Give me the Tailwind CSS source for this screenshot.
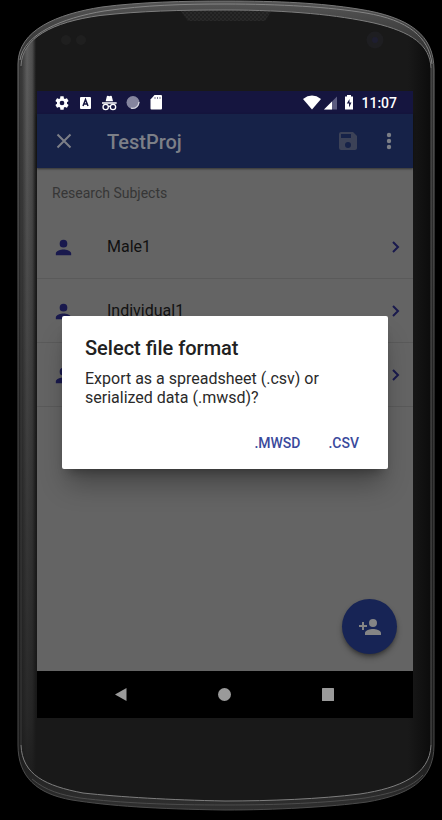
<!DOCTYPE html>
<html lang="en">
<head>
<meta charset="utf-8">
<meta name="viewport" content="width=device-width, initial-scale=1">
<title>TestProj</title>
<script src="https://cdn.jsdelivr.net/npm/@tailwindcss/browser@4"></script>
</head>
<body class="bg-black font-['Roboto',sans-serif]">
<div class="relative isolate flex min-h-screen flex-col pt-[91px] pr-[29px] pb-[102px] pl-[37px]">
  <!-- Phone body -->
  <svg class="absolute inset-0 -z-10 h-full w-full" viewBox="0 0 442 820" preserveAspectRatio="none" aria-hidden="true">
    <defs>
      <linearGradient id="rim" x1="0" y1="0" x2="0" y2="1">
        <stop offset="0" stop-color="#555"/><stop offset=".06" stop-color="#333"/><stop offset=".5" stop-color="#222"/><stop offset=".93" stop-color="#1c1c1c"/><stop offset="1" stop-color="#303030"/>
      </linearGradient>
      <linearGradient id="edge" x1="0" y1="0" x2="0" y2="1">
        <stop offset="0" stop-color="#777"/><stop offset=".5" stop-color="#4c4c4c"/><stop offset="1" stop-color="#4a4a4a"/>
      </linearGradient>
      <linearGradient id="side" x1="0" y1="0" x2="1" y2="0">
        <stop offset="0" stop-color="#333"/><stop offset=".4" stop-color="#626262"/><stop offset=".75" stop-color="#505050"/><stop offset="1" stop-color="#191919"/>
      </linearGradient>
      <linearGradient id="fade" x1="0" y1="0" x2="0" y2="1">
        <stop offset="0" stop-color="#191919" stop-opacity="0"/><stop offset=".5" stop-color="#191919" stop-opacity=".45"/><stop offset=".9" stop-color="#191919" stop-opacity=".8"/><stop offset="1" stop-color="#191919"/>
      </linearGradient>
      <linearGradient id="right" x1="0" y1="0" x2="1" y2="0">
        <stop offset="0" stop-color="#0b0b0b" stop-opacity="0"/><stop offset="1" stop-color="#0b0b0b"/>
      </linearGradient>
      <pattern id="mesh" width="4" height="4" patternUnits="userSpaceOnUse"><rect width="4" height="4" fill="#292929"/><circle cx="1" cy="1" r="1" fill="#1c1c1c"/><circle cx="3" cy="3" r="1" fill="#1c1c1c"/></pattern>
      <clipPath id="face"><path d="M21 68C21 38 52 22 100 15.500C140 11 180 10 225 10C290 10 338 15 374 23C412 32 431 45 431 68V745C430 775 400 788 360 794C320 799 270 801 225 801C170 800 120 797 83 793C46 786 22 775 21 745Z"/></clipPath>
    </defs>
    <path d="M18 64C18 30 57 14 102 7C140 2 185 1 225 1C280 1 320 3 358 9C410 17 434 35 434 70V745C434 782 407 795 367 802C330 807 275 810 225 810C155 809 110 806 72 800C37 794 18 777 18 745Z" fill="url(#rim)" stroke="url(#edge)"/>
    <path d="M20 60C24 34 62 18 104 11C145 5 185 4 225 4C280 4 330 7 366 13C408 20 429 37 432 64" fill="none" stroke="#858585"/>
    <path d="M32 779C46 791 62 795 80 798C120 803 170 805 225 805C280 805 325 803 365 798C395 793 412 787 423 775" fill="none" stroke="#4c4c4c"/>
    <path d="M21 68C21 38 52 22 100 15.500C140 11 180 10 225 10C290 10 338 15 374 23C412 32 431 45 431 68V745C430 775 400 788 360 794C320 799 270 801 225 801C170 800 120 797 83 793C46 786 22 775 21 745Z" fill="#191919"/>
    <g clip-path="url(#face)">
      <rect x="21" y="10" width="15" height="792" fill="url(#side)"/>
      <rect x="21" y="10" width="15" height="792" fill="url(#fade)"/>
      <rect x="408" y="10" width="24" height="792" fill="url(#right)"/>
      <path d="M180 10H272L265 21H188Z" fill="url(#mesh)"/>
    </g>
    <path d="M431 68V745" stroke="#555"/>
    <path d="M21 68V745" stroke="#3c3c3c"/>
    <path d="M21 66C22 38 52 22 100 15.500C140 11 180 10 225 10C290 10 338 15 374 23C412 32 430 45 431 68M21 745C22 775 46 786 83 793C120 797 170 800 225 801C270 801 320 799 360 794C400 788 430 775 431 745" fill="none" stroke="#7e7e7e"/>
    <circle cx="66" cy="40" r="5" fill="#1f1f1f"/><circle cx="81" cy="40" r="5" fill="#1f1f1f"/>
    <circle cx="375" cy="40" r="8.500" fill="#1e1e21"/><circle cx="375" cy="40" r="3" fill="#1e1e30"/>
  </svg>

  <div class="relative flex flex-1 flex-col">
    <!-- Status bar -->
    <div class="flex h-[23px] items-center justify-between bg-[#15153f] pr-4 pl-[17px] text-white">
      <div class="flex items-center gap-2">
        <svg class="size-4" viewBox="0 0 24 24" fill="currentColor" role="img" aria-label="Settings"><path d="M19.430 12.980c.04-.32.07-.64.07-.98s-.03-.66-.07-.98l2.110-1.650c.19-.15.24-.42.12-.64l-2-3.460c-.12-.22-.39-.3-.61-.22l-2.490 1c-.52-.4-1.080-.73-1.690-.98l-.38-2.650A.49.49 0 0 0 14 2h-4c-.25 0-.46.18-.49.42l-.38 2.650c-.61.25-1.170.59-1.690.98l-2.490-1c-.23-.09-.49 0-.61.22l-2 3.460c-.13.22-.07.49.12.64l2.110 1.650c-.04.32-.07.65-.07.98s.03.66.07.98l-2.110 1.650c-.19.15-.24.42-.12.64l2 3.460c.12.22.39.3.61.22l2.490-1c.52.4 1.080.73 1.690.98l.38 2.650c.03.24.24.42.49.42h4c.25 0 .46-.18.49-.42l.38-2.650c.61-.25 1.170-.59 1.690-.98l2.490 1c.23.09.49 0 .61-.22l2-3.460c.12-.22.07-.49-.12-.64zM12 15.500a3.500 3.500 0 1 1 0-7 3.500 3.500 0 0 1 0 7z"/></svg>
        <svg class="size-4" viewBox="0 0 16 16" role="img" aria-label="Keyboard"><rect x="2" y="2" width="11" height="12" rx="1" fill="#fff"/><path d="M5 11 7.500 4.500 10 11M5.800 9h3.400" fill="none" stroke="#15153f" stroke-width="1.500"/></svg>
        <svg class="size-4" viewBox="0 0 24 24" fill="currentColor" role="img" aria-label="Incognito"><path d="M16.500 9.500h-11L7.300 1.900c.2-.7.900-1 1.500-.8L11 1.800l2.200-.7c.6-.2 1.300.1 1.500.8zM0 11h22v2H0z"/><path d="M1.500 18a4 4 0 1 0 8 0 4 4 0 1 0-8 0zM12.500 18a4 4 0 1 0 8 0 4 4 0 1 0-8 0zM9.500 17.500q1.500-1.500 3 0" fill="none" stroke="currentColor" stroke-width="2"/></svg>
        <svg class="size-4" viewBox="0 0 16 16" role="img" aria-label="Sync"><circle cx="7" cy="7.500" r="6.500" fill="#85859e"/><path d="M5 13.200Q12 14 13 7" fill="none" stroke="#d5d5df" stroke-width="1.200"/></svg>
        <svg class="size-4" viewBox="0 0 16 16" role="img" aria-label="SD card"><path d="M4.500 0H11q1 0 1 1V13.500q0 1-1 1H1.500q-1 0-1-1V4.500z" fill="#fff"/><path d="M5 2v2M7.500 2v2M10 2v2" stroke="#777790"/></svg>
      </div>
      <div class="flex items-center gap-0.5">
        <svg class="h-4 w-[18px]" viewBox="0 0 18 16" role="img" aria-label="Wi-Fi"><path d="M0 4Q9-2.800 18 4L9 14.500z" fill="#fff"/></svg>
        <svg class="size-4" viewBox="0 0 16 16" role="img" aria-label="Signal"><path d="M1 14.500 14 1.500V14.500z" fill="#5c5c80"/><path d="M1 14.500 9 6.500V14.500z" fill="#fff"/></svg>
        <svg class="size-4" viewBox="0 0 16 16" role="img" aria-label="Battery charging"><path d="M6 1.500V0H10V1.500H12V14.500H4V1.500z" fill="#fff"/><path d="M8.500 4 5.800 8.500H8V12.500l2.500-5H8.500z" fill="#15153f"/></svg>
        <span class="pl-0.5 text-sm leading-4 font-medium">11:07</span>
      </div>
    </div>

    <!-- App bar -->
    <header class="z-10 flex h-[54px] items-center bg-[#162248] pr-3 pl-[17px] text-[#7c7f87] shadow-xs shadow-black/50">
      <button type="button" aria-label="Close" class="w-[53px]"><svg class="size-5" viewBox="0 0 20 20" fill="none" stroke="currentColor" stroke-width="2"><path d="m3.500 3.500 13 13M16.500 3.500l-13 13"/></svg></button>
      <h1 class="flex-1 pt-0.5 text-xl leading-6 font-medium">TestProj</h1>
      <button type="button" aria-label="Save" class="pr-[17px] text-[#3c4257]"><svg class="size-6" viewBox="0 0 24 24" fill="currentColor"><path d="M17 3H5a2 2 0 0 0-2 2v14a2 2 0 0 0 2 2h14c1.100 0 2-.9 2-2V7zm-5 16a3 3 0 1 1 0-6 3 3 0 0 1 0 6zm3-10H5V5h10z"/></svg></button>
      <button type="button" aria-label="More options"><svg class="size-6" viewBox="0 0 24 24" fill="currentColor"><circle cx="12" cy="6" r="2.200"/><circle cx="12" cy="12" r="2.200"/><circle cx="12" cy="18" r="2.200"/></svg></button>
    </header>

    <!-- Subject list -->
    <main class="flex-1 bg-[#646464]">
      <h2 class="flex h-[47px] items-center pt-0.5 pl-[15px] text-sm text-[#363636]">Research Subjects</h2>
      <ul class="text-base text-[#111]">
        <li class="h-16 border-b border-[#5a5a5a]"><a href="#male1" class="flex h-full items-center pt-px pr-2 pl-[15px]">
          <svg class="mr-8 size-[23px] text-[#19194d]" viewBox="0 0 24 24" fill="currentColor" aria-hidden="true"><path d="M12 12a4 4 0 1 0 0-8 4 4 0 0 0 0 8zm0 2c-2.670 0-8 1.340-8 4v2h16v-2c0-2.660-5.330-4-8-4z"/></svg>
          <span class="flex-1">Male1</span>
          <svg class="size-5 text-[#19194d]" viewBox="0 0 20 20" fill="none" stroke="currentColor" stroke-width="2" aria-hidden="true"><path d="m8 5 5 5-5 5"/></svg></a></li>
        <li class="h-16 border-b border-[#5a5a5a]"><a href="#individual1" class="flex h-full items-center pt-px pr-2 pl-[15px]">
          <svg class="mr-8 size-[23px] text-[#19194d]" viewBox="0 0 24 24" fill="currentColor" aria-hidden="true"><path d="M12 12a4 4 0 1 0 0-8 4 4 0 0 0 0 8zm0 2c-2.670 0-8 1.340-8 4v2h16v-2c0-2.660-5.330-4-8-4z"/></svg>
          <span class="flex-1">Individual1</span>
          <svg class="size-5 text-[#19194d]" viewBox="0 0 20 20" fill="none" stroke="currentColor" stroke-width="2" aria-hidden="true"><path d="m8 5 5 5-5 5"/></svg></a></li>
        <li class="h-16 border-b border-[#5a5a5a]"><a href="#subject3" aria-label="Subject" class="flex h-full items-center pt-px pr-2 pl-[15px]">
          <svg class="mr-8 size-[23px] text-[#19194d]" viewBox="0 0 24 24" fill="currentColor" aria-hidden="true"><path d="M12 12a4 4 0 1 0 0-8 4 4 0 0 0 0 8zm0 2c-2.670 0-8 1.340-8 4v2h16v-2c0-2.660-5.330-4-8-4z"/></svg>
          <span class="flex-1"></span>
          <svg class="size-5 text-[#19194d]" viewBox="0 0 20 20" fill="none" stroke="currentColor" stroke-width="2" aria-hidden="true"><path d="m8 5 5 5-5 5"/></svg></a></li>
      </ul>
    </main>

    <!-- Add button -->
    <button type="button" aria-label="Add subject" class="absolute right-4 bottom-16 flex size-[55px] items-center justify-center rounded-full bg-[#172455] text-[#858585] shadow-md shadow-black/40">
      <svg class="size-6" viewBox="0 0 24 24" fill="currentColor"><path d="M15 12a4 4 0 1 0 0-8 4 4 0 0 0 0 8zm-9-2V7H4v3H1v2h3v3h2v-3h3v-2zm9 4c-2.670 0-8 1.340-8 4v2h16v-2c0-2.660-5.330-4-8-4z"/></svg>
    </button>

    <!-- Navigation bar -->
    <nav class="flex h-[47px] items-center justify-center gap-[79px] bg-black text-[#9a9a9a]">
      <button type="button" aria-label="Back"><svg class="size-6" viewBox="0 0 24 24" fill="currentColor"><path d="M16.500 5V18L5 11.500z"/></svg></button>
      <button type="button" aria-label="Home"><svg class="size-6" viewBox="0 0 24 24" fill="currentColor"><circle cx="11.500" cy="11.500" r="6.500"/></svg></button>
      <button type="button" aria-label="Recent apps"><svg class="size-6" viewBox="0 0 24 24" fill="currentColor"><rect x="6" y="5" width="12" height="13" rx=".5"/></svg></button>
    </nav>

    <!-- File format dialog -->
    <div role="dialog" aria-modal="true" aria-labelledby="dialog-title" class="absolute inset-x-[25px] top-[225px] z-20 rounded-xs bg-white px-[23px] pt-5 pb-3 shadow-xl shadow-black/30">
      <h2 id="dialog-title" class="text-xl leading-6 font-medium text-[#212121]">Select file format</h2>
      <p class="pt-[9px] pr-9 text-base leading-[19px] text-[#2a2a2a]">Export as a spreadsheet (.csv) or serialized data (.mwsd)?</p>
      <div class="flex justify-end gap-7 pt-[22px] pr-1.5 text-sm leading-5 font-medium text-[#3a4a9c]">
        <button type="button" class="py-1">.MWSD</button>
        <button type="button" class="py-1">.CSV</button>
      </div>
    </div>
  </div>
</div>
</body>
</html>
